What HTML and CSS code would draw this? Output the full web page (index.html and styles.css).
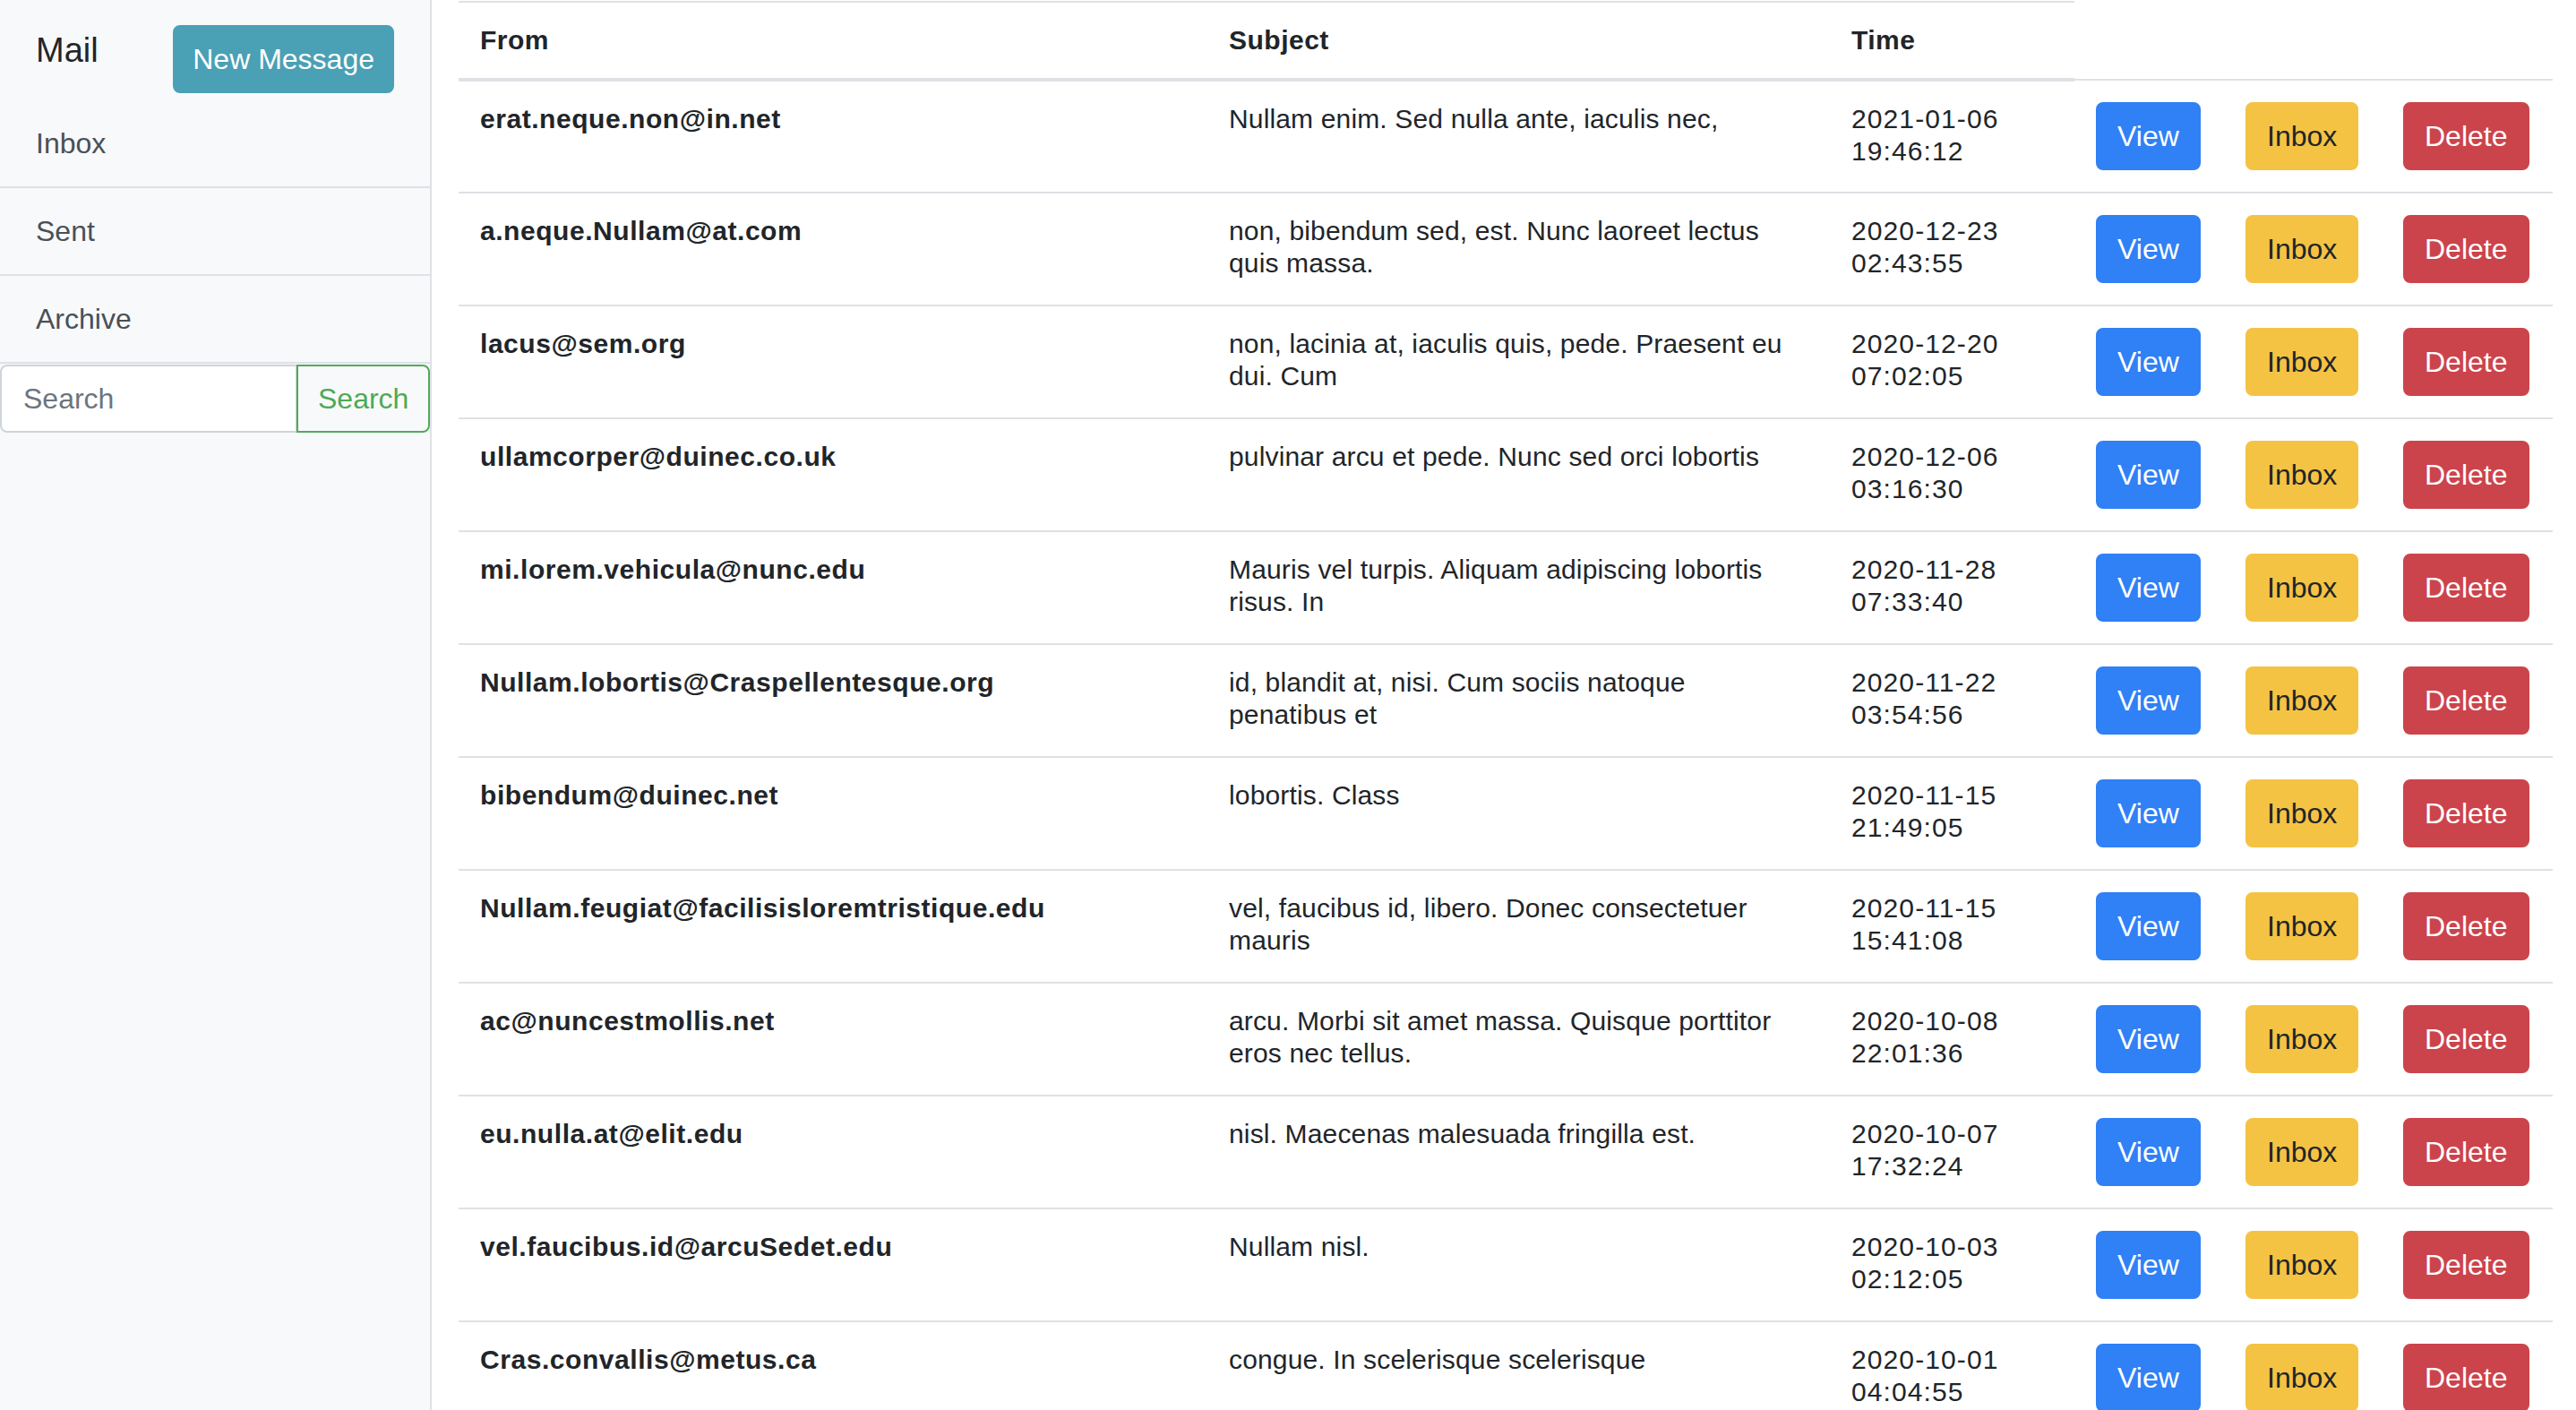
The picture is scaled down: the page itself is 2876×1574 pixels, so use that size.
FILE: index.html
```html
<!DOCTYPE html>
<html lang="en">
<head>
<meta charset="utf-8">
<title>Mail</title>
<link rel="stylesheet" href="styles.css">
</head>
<body>
<div class="app">
  <aside class="sidebar">
    <div class="brand-bar">
      <span class="brand">Mail</span>
      <button class="btn btn-info btn-new">New Message</button>
    </div>
    <ul class="nav-list">
      <li class="nav-item">Inbox</li>
      <li class="nav-item">Sent</li>
      <li class="nav-item">Archive</li>
    </ul>
    <form class="search-form">
      <input class="search-input" type="text" placeholder="Search">
      <button class="btn btn-outline-success" type="button">Search</button>
    </form>
  </aside>
  <main class="main">
    <table class="mail-table">
      <colgroup>
        <col class="c-from"><col class="c-subject"><col class="c-time"><col class="c-view"><col class="c-inbox"><col class="c-delete">
      </colgroup>
      <thead>
        <tr><th>From</th><th>Subject</th><th>Time</th></tr>
      </thead>
      <tbody>
        <tr><td class="from">erat.neque.non@in.net</td><td class="subject">Nullam enim. Sed nulla ante, iaculis nec,</td><td class="time">2021-01-06 19:46:12</td><td><button class="btn btn-primary">View</button></td><td><button class="btn btn-warning">Inbox</button></td><td><button class="btn btn-danger">Delete</button></td></tr>
        <tr><td class="from">a.neque.Nullam@at.com</td><td class="subject">non, bibendum sed, est. Nunc laoreet lectus quis massa.</td><td class="time">2020-12-23 02:43:55</td><td><button class="btn btn-primary">View</button></td><td><button class="btn btn-warning">Inbox</button></td><td><button class="btn btn-danger">Delete</button></td></tr>
        <tr><td class="from">lacus@sem.org</td><td class="subject">non, lacinia at, iaculis quis, pede. Praesent eu dui. Cum</td><td class="time">2020-12-20 07:02:05</td><td><button class="btn btn-primary">View</button></td><td><button class="btn btn-warning">Inbox</button></td><td><button class="btn btn-danger">Delete</button></td></tr>
        <tr><td class="from">ullamcorper@duinec.co.uk</td><td class="subject">pulvinar arcu et pede. Nunc sed orci lobortis</td><td class="time">2020-12-06 03:16:30</td><td><button class="btn btn-primary">View</button></td><td><button class="btn btn-warning">Inbox</button></td><td><button class="btn btn-danger">Delete</button></td></tr>
        <tr><td class="from">mi.lorem.vehicula@nunc.edu</td><td class="subject">Mauris vel turpis. Aliquam adipiscing lobortis risus. In</td><td class="time">2020-11-28 07:33:40</td><td><button class="btn btn-primary">View</button></td><td><button class="btn btn-warning">Inbox</button></td><td><button class="btn btn-danger">Delete</button></td></tr>
        <tr><td class="from">Nullam.lobortis@Craspellentesque.org</td><td class="subject">id, blandit at, nisi. Cum sociis natoque penatibus et</td><td class="time">2020-11-22 03:54:56</td><td><button class="btn btn-primary">View</button></td><td><button class="btn btn-warning">Inbox</button></td><td><button class="btn btn-danger">Delete</button></td></tr>
        <tr><td class="from">bibendum@duinec.net</td><td class="subject">lobortis. Class</td><td class="time">2020-11-15 21:49:05</td><td><button class="btn btn-primary">View</button></td><td><button class="btn btn-warning">Inbox</button></td><td><button class="btn btn-danger">Delete</button></td></tr>
        <tr><td class="from">Nullam.feugiat@facilisisloremtristique.edu</td><td class="subject">vel, faucibus id, libero. Donec consectetuer mauris</td><td class="time">2020-11-15 15:41:08</td><td><button class="btn btn-primary">View</button></td><td><button class="btn btn-warning">Inbox</button></td><td><button class="btn btn-danger">Delete</button></td></tr>
        <tr><td class="from">ac@nuncestmollis.net</td><td class="subject">arcu. Morbi sit amet massa. Quisque porttitor eros nec tellus.</td><td class="time">2020-10-08 22:01:36</td><td><button class="btn btn-primary">View</button></td><td><button class="btn btn-warning">Inbox</button></td><td><button class="btn btn-danger">Delete</button></td></tr>
        <tr><td class="from">eu.nulla.at@elit.edu</td><td class="subject">nisl. Maecenas malesuada fringilla est.</td><td class="time">2020-10-07 17:32:24</td><td><button class="btn btn-primary">View</button></td><td><button class="btn btn-warning">Inbox</button></td><td><button class="btn btn-danger">Delete</button></td></tr>
        <tr><td class="from">vel.faucibus.id@arcuSedet.edu</td><td class="subject">Nullam nisl.</td><td class="time">2020-10-03 02:12:05</td><td><button class="btn btn-primary">View</button></td><td><button class="btn btn-warning">Inbox</button></td><td><button class="btn btn-danger">Delete</button></td></tr>
        <tr><td class="from">Cras.convallis@metus.ca</td><td class="subject">congue. In scelerisque scelerisque</td><td class="time">2020-10-01 04:04:55</td><td><button class="btn btn-primary">View</button></td><td><button class="btn btn-warning">Inbox</button></td><td><button class="btn btn-danger">Delete</button></td></tr>
      </tbody>
    </table>
  </main>
</div>
</body>
</html>
```
FILE: styles.css
```css
html, body {
  margin: 0;
  padding: 0;
  height: 100%;
  overflow: hidden;
}
body {
  font-family: "Liberation Sans", Arial, sans-serif;
  color: #212529;
  background: #ffffff;
}
.app {
  display: flex;
  min-height: 100vh;
}
.sidebar {
  width: 482px;
  flex: 0 0 482px;
  box-sizing: border-box;
  background: #f8f9fa;
  border-right: 2px solid #dee2e6;
  min-height: 100vh;
}
.brand-bar {
  display: flex;
  align-items: flex-start;
  justify-content: space-between;
  padding: 28px 40px 8px 40px;
}
.brand {
  font-size: 38px;
  line-height: 57px;
  color: #212529;
}
.btn {
  display: inline-block;
  box-sizing: border-box;
  height: 76px;
  padding: 12px 22px;
  border: 2px solid transparent;
  border-radius: 8px;
  font-family: "Liberation Sans", Arial, sans-serif;
  font-size: 32px;
  line-height: 48px;
  white-space: nowrap;
  cursor: pointer;
}
.btn-new {
  padding: 12px 20px;
}
.btn-info {
  background: #4aa0b5;
  border-color: #4aa0b5;
  color: #ffffff;
}
.btn-primary {
  background: #3080f6;
  border-color: #3080f6;
  color: #ffffff;
}
.btn-warning {
  background: #f5c343;
  border-color: #f5c343;
  color: #212529;
}
.btn-danger {
  background: #cc444b;
  border-color: #cc444b;
  color: #ffffff;
}
.btn-outline-success {
  background: transparent;
  border-color: #52a95a;
  color: #4ea956;
}
.nav-list {
  list-style: none;
  margin: 0;
  padding: 0;
}
.nav-item {
  padding: 24px 40px;
  font-size: 32px;
  line-height: 48px;
  color: #495057;
  border-bottom: 2px solid #dee2e6;
}
.search-form {
  display: flex;
  margin: 1px 0 0 0;
}
.search-input {
  flex: 0 0 332px;
  width: 332px;
  box-sizing: border-box;
  height: 76px;
  padding: 12px 24px;
  border: 2px solid #ced4da;
  border-radius: 8px 0 0 8px;
  background: #ffffff;
  font-family: "Liberation Sans", Arial, sans-serif;
  font-size: 32px;
  color: #495057;
  outline: none;
}
.search-input::placeholder {
  color: #6c757d;
}
.search-form .btn {
  flex: 1 1 auto;
  border-radius: 0 8px 8px 0;
  margin-left: -1px;
}
.main {
  flex: 1 1 auto;
  padding: 1px 26px 0 30px;
  min-width: 0;
}
.mail-table {
  width: 100%;
  table-layout: fixed;
  border-collapse: collapse;
  font-size: 30px;
  line-height: 36px;
  color: #212529;
}
.c-from { width: 836px; }
.c-subject { width: 695px; }
.c-time { width: 273px; }
.c-view { width: 167px; }
.c-inbox { width: 176px; }
.c-delete { width: 191px; }
.mail-table th {
  text-align: left;
  font-weight: bold;
  letter-spacing: 0.5px;
  padding: 24px;
  vertical-align: bottom;
  border-top: 2px solid #dee2e6;
  border-bottom: 4px solid #dee2e6;
}
.mail-table td {
  padding: 24px;
  vertical-align: top;
  border-top: 2px solid #dee2e6;
}
.mail-table td.from {
  font-weight: bold;
  letter-spacing: 0.55px;
}
.mail-table td.subject {
  letter-spacing: 0.15px;
}
.mail-table td.time {
  letter-spacing: 1.1px;
}
```
